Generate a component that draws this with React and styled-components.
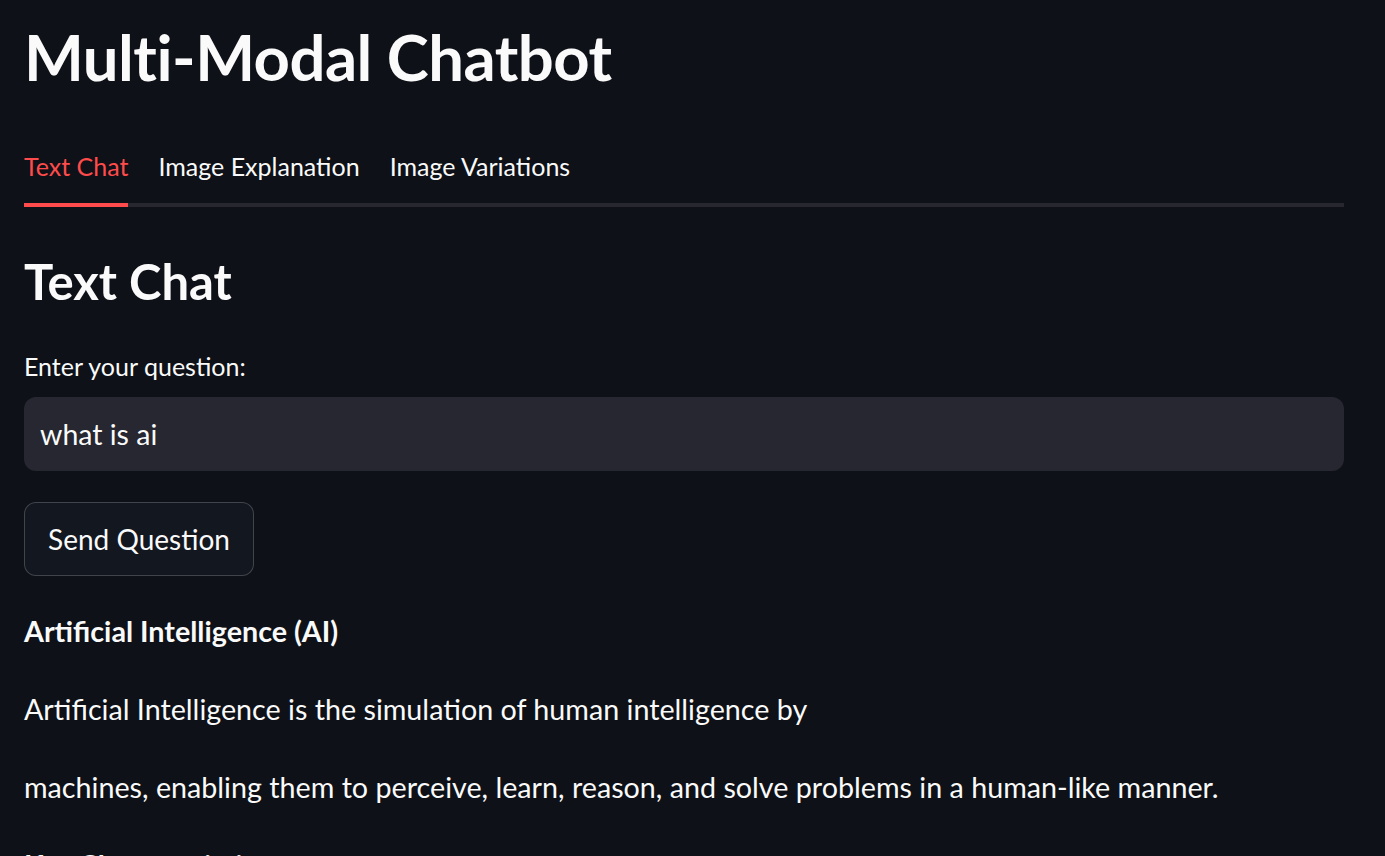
import React, { useState } from 'react'
import styled, { createGlobalStyle } from 'styled-components'

const GlobalStyle = createGlobalStyle`
  html, body {
    margin: 0;
    padding: 0;
    background: #0e1117;
  }
  body {
    font-family: Lato, "Liberation Sans", sans-serif;
    color: #fafafa;
    overflow: hidden;
  }
`

const Page = styled.div`
  width: 1385px;
  height: 856px;
  padding: 19px 41px 0 24px;
  box-sizing: border-box;
  overflow: hidden;
  background: #0e1117;
`
const Title = styled.h1`
  margin: 0;
  font-size: 63.4px;
  font-weight: 700;
  line-height: 1.2;
  letter-spacing: -0.5px;
`
const TabList = styled.div`
  display: flex;
  gap: 30px;
  margin-top: 55px;
  box-shadow: inset 0 -4px 0 #26272f;
`
const Tab = styled.button`
  background: none;
  border: none;
  border-bottom: 4px solid ${props => props.active ? '#ff4b4b' : 'transparent'};
  padding: 1px 0 22px 0;
  margin: 0;
  font-family: inherit;
  font-size: 25px;
  line-height: 1.2;
  color: ${props => props.active ? '#ff4b4b' : '#fafafa'};
  cursor: pointer;
`
const Heading = styled.h2`
  margin: 45px 0 0 0;
  font-size: 49px;
  font-weight: 700;
  line-height: 1.2;
`
const Label = styled.label`
  display: block;
  margin-top: 40px;
  font-size: 25px;
  line-height: 1.2;
`
const Input = styled.input`
  display: block;
  box-sizing: border-box;
  width: 100%;
  height: 74px;
  margin-top: 16px;
  padding: 0 16px;
  border: none;
  border-radius: 12px;
  background: #262730;
  color: #fafafa;
  font-family: inherit;
  font-size: 28.5px;
  outline: none;
`
const Button = styled.button`
  display: block;
  box-sizing: border-box;
  width: 230px;
  height: 74px;
  margin-top: 31px;
  padding: 0;
  border: 1px solid rgba(250, 250, 250, 0.2);
  border-radius: 12px;
  background: #131720;
  color: #fafafa;
  font-family: inherit;
  font-size: 28px;
  cursor: pointer;
`
const Answer = styled.div`
  margin-top: 37.7px;
`
const Para = styled.p`
  margin: 0 0 43.6px 0;
  font-size: 28.7px;
  line-height: 1.2;
  font-weight: ${props => props.bold ? 700 : 400};
`

const tabs = ['Text Chat', 'Image Explanation', 'Image Variations']

export default function App () {
  const [active, setActive] = useState(0)
  const [question, setQuestion] = useState('what is ai')
  return (
    <Page>
      <GlobalStyle />
      <Title>Multi-Modal Chatbot</Title>
      <TabList>
        {tabs.map((t, i) => (
          <Tab key={t} active={i === active} onClick={() => setActive(i)}>{t}</Tab>
        ))}
      </TabList>
      <Heading>Text Chat</Heading>
      <Label htmlFor='q'>Enter your question:</Label>
      <Input id='q' value={question} onChange={e => setQuestion(e.target.value)} />
      <Button>Send Question</Button>
      <Answer>
        <Para bold>Artificial Intelligence (AI)</Para>
        <Para>Artificial Intelligence is the simulation of human intelligence by</Para>
        <Para>machines, enabling them to perceive, learn, reason, and solve problems in a human-like manner.</Para>
        <Para bold>Key Characteristics</Para>
      </Answer>
    </Page>
  )
}
